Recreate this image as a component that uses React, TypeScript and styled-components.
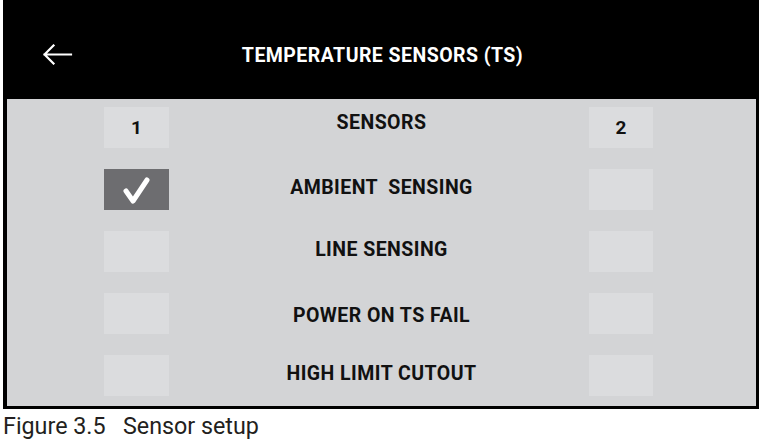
import React from 'react';
import styled, { createGlobalStyle } from 'styled-components';

const GlobalStyle = createGlobalStyle`
  body {
    margin: 0;
    background: #ffffff;
    font-family: Roboto, 'Liberation Sans', sans-serif;
  }
`;

interface Row {
  label: string;
  left: boolean;
  right: boolean;
  shift: number;
}

const rows: Row[] = [
  { label: 'AMBIENT  SENSING', left: true, right: false, shift: -2 },
  { label: 'LINE SENSING', left: false, right: false, shift: -2 },
  { label: 'POWER ON TS FAIL', left: false, right: false, shift: 2 },
  { label: 'HIGH LIMIT CUTOUT', left: false, right: false, shift: -2 },
];

const Figure = styled.figure`
  margin: 0;
  width: 761px;
`;

const Screen = styled.div`
  margin-left: 3px;
  width: 756px;
  height: 409px;
  box-sizing: border-box;
  background: #000;
  border-style: solid;
  border-color: #000;
  border-width: 0 3px 3px 4px;
  display: flex;
  flex-direction: column;
`;

const Header = styled.header`
  height: 99px;
  flex: none;
  position: relative;
  display: flex;
  align-items: center;
  justify-content: center;
  padding: 12px 0 0 2px;
  box-sizing: border-box;
`;

const BackButton = styled.button`
  position: absolute;
  left: 36px;
  top: 44px;
  padding: 0;
  border: none;
  background: transparent;
  width: 30px;
  height: 21px;
  display: flex;
`;

const Title = styled.h1`
  margin: 0;
  color: #fff;
  font-size: 19.5px;
  font-weight: 700;
  letter-spacing: 0.45px;
`;

const Body = styled.div`
  flex: 1;
  background: #d3d4d6;
  display: grid;
  grid-template-columns: 97px 65px 1fr 64px 103px;
  grid-auto-rows: 41px;
  row-gap: 21px;
  padding: 8px 0 10px;
  align-content: start;
`;

const Cell = styled.div<{ $col: number; $on?: boolean }>`
  grid-column: ${(p) => p.$col};
  background: ${(p) => (p.$on ? '#6d6d70' : '#dbdcde')};
  display: flex;
  align-items: center;
  justify-content: center;
  font-size: 19px;
  font-weight: 700;
  color: #111;
`;

const Label = styled.div<{ $shift: number }>`
  grid-column: 3;
  display: flex;
  align-items: center;
  justify-content: center;
  padding-left: 5px;
  font-size: 19.5px;
  font-weight: 700;
  letter-spacing: 0.45px;
  color: #111;
  white-space: pre;
  transform: translateY(${(p) => p.$shift}px);
`;

const Caption = styled.figcaption`
  margin: 3px 0 0 3px;
  font-size: 23.3px;
  color: #231f20;
  white-space: pre;
`;

const BackArrow = () => (
  <svg width="30" height="21" viewBox="0 0 30 21" fill="none">
    <path
      d="M1.5 10.5 H28 M10.5 1.5 L1.5 10.5 L10.5 19.5"
      stroke="#fff"
      strokeWidth="2.2"
      strokeLinecap="square"
    />
  </svg>
);

const Check = () => (
  <svg width="30" height="32" viewBox="0 0 30 32" fill="none">
    <path
      d="M4 17 L11 27 L25 6"
      stroke="#fff"
      strokeWidth="5"
      strokeLinecap="round"
      strokeLinejoin="round"
    />
  </svg>
);

const App = () => (
  <>
    <GlobalStyle />
    <Figure>
      <Screen>
        <Header>
          <BackButton aria-label="Back">
            <BackArrow />
          </BackButton>
          <Title>TEMPERATURE SENSORS (TS)</Title>
        </Header>
        <Body>
          <Cell $col={2}>1</Cell>
          <Label $shift={-5}>SENSORS</Label>
          <Cell $col={4}>2</Cell>
          {rows.map((row) => (
            <React.Fragment key={row.label}>
              <Cell $col={2} $on={row.left}>
                {row.left && <Check />}
              </Cell>
              <Label $shift={row.shift}>{row.label}</Label>
              <Cell $col={4} $on={row.right}>
                {row.right && <Check />}
              </Cell>
            </React.Fragment>
          ))}
        </Body>
      </Screen>
      <Caption>{'Figure 3.5   Sensor setup'}</Caption>
    </Figure>
  </>
);

export default App;
